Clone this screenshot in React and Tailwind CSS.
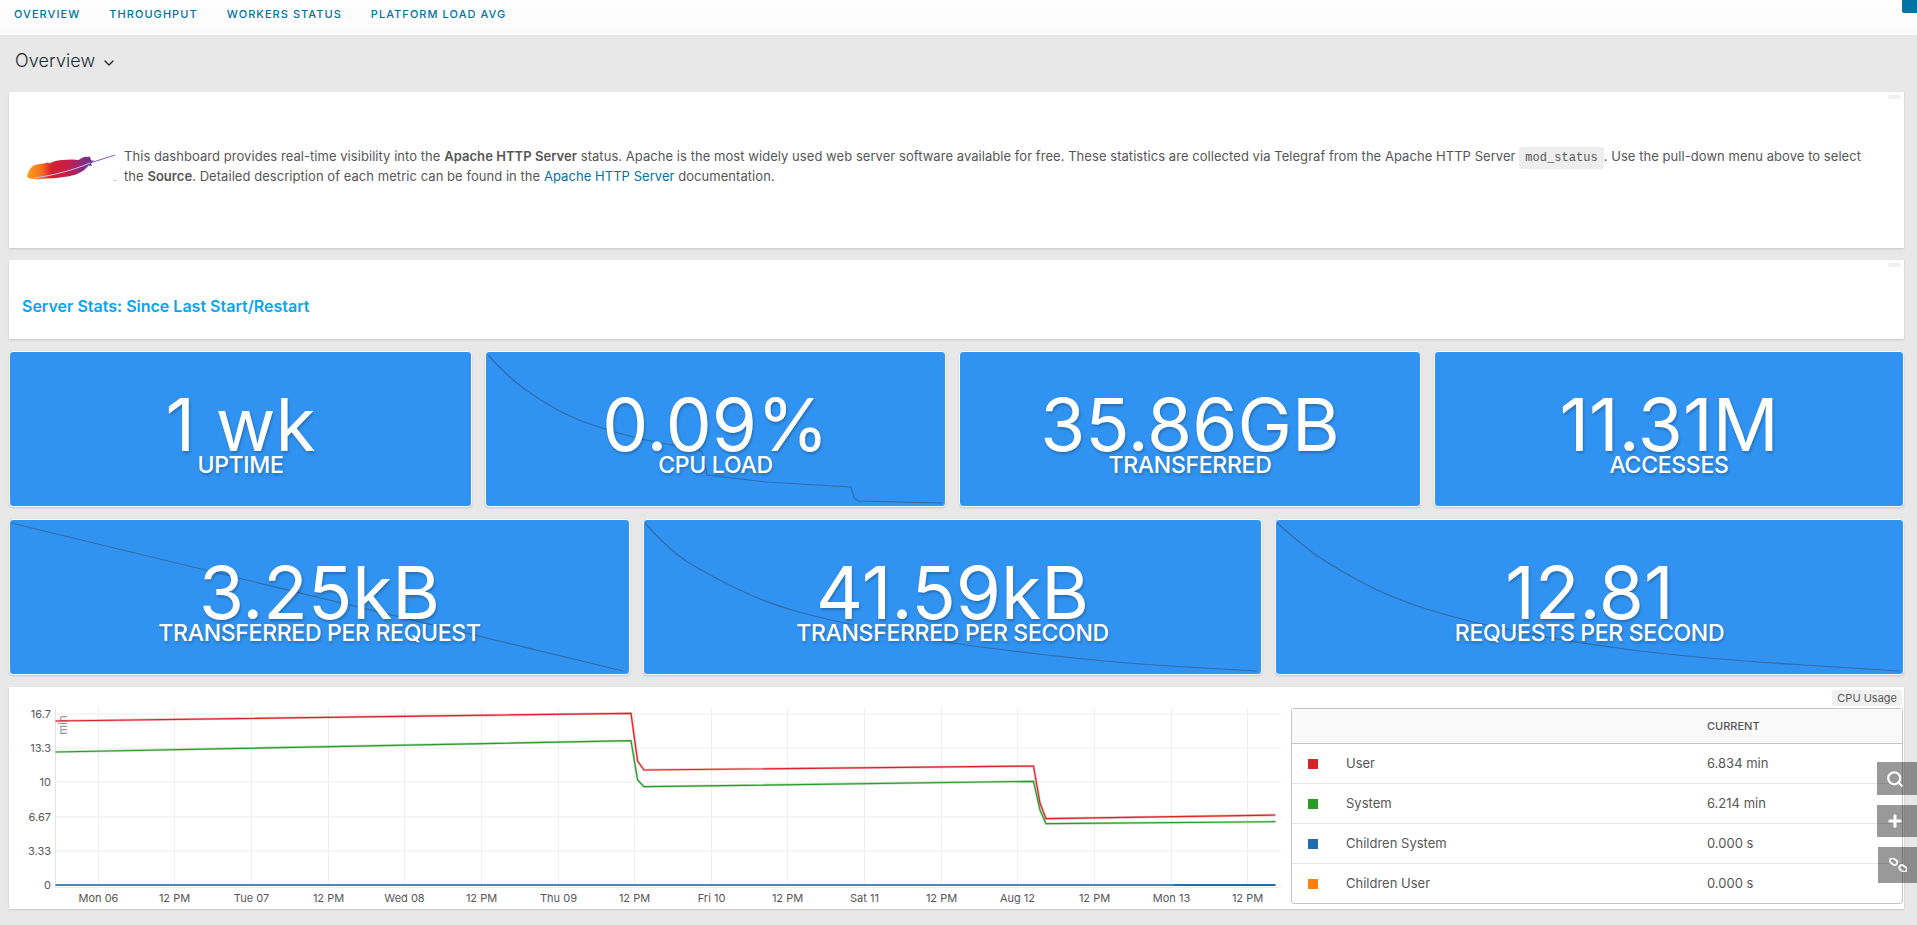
import { ChevronDown, Plus, Search } from 'lucide-react';

const sans = 'font-["Inter","Noto_Sans",sans-serif]';

const navItems = ['Overview', 'Throughput', 'Workers Status', 'Platform Load AVG'];

// rounds the decay curves off between the sampled points
const smooth = points => {
  let d = `M${points[0][0]} ${points[0][1]}`;
  for (let i = 1; i < points.length - 1; i++) {
    const [x, y] = points[i];
    const [nx, ny] = points[i + 1];
    d += `Q${x} ${y} ${(x + nx) / 2} ${(y + ny) / 2}`;
  }
  const last = points[points.length - 1];
  return `${d}L${last[0]} ${last[1]}`;
};

const topCards = [
  { value: '1 wk', label: 'Uptime' },
  {
    value: '0.09%',
    label: 'CPU Load',
    w: 461,
    line:
      smooth([[2, 3], [23, 26], [54, 48], [84, 65], [121, 78], [158, 88], [213, 98]]) +
      'L216 100L221 123L280 130L365 135L368 146L372 149L456 151',
  },
  { value: '35.86GB', label: 'Transferred' },
  { value: '11.31M', label: 'Accesses' },
];

const bottomCards = [
  { value: '3.25kB', label: 'Transferred per request', w: 621, line: 'M1 3L613 151' },
  {
    value: '41.59kB',
    label: 'Transferred per second',
    w: 619,
    line: smooth([[1, 3], [25, 30], [61, 53], [122, 83], [184, 100], [250, 113], [317, 125], [470, 143], [613, 151]]),
  },
  {
    value: '12.81',
    label: 'Requests per second',
    w: 629,
    line: smooth([[1, 3], [25, 24], [51, 43], [112, 77], [192, 102], [295, 122], [417, 138], [623, 151]]),
  },
];

const yTicks = [
  ['16.7', 714],
  ['13.3', 748],
  ['10', 782],
  ['6.67', 817],
  ['3.33', 851],
  ['0', 885],
];

const xTicks = [
  ['Mon 06', 98.5],
  ['12 PM', 174.5],
  ['Tue 07', 251.5],
  ['12 PM', 328.5],
  ['Wed 08', 404.5],
  ['12 PM', 481.5],
  ['Thu 09', 558.5],
  ['12 PM', 634.5],
  ['Fri 10', 711.5],
  ['12 PM', 787.5],
  ['Sat 11', 864.5],
  ['12 PM', 941.5],
  ['Aug 12', 1017.5],
  ['12 PM', 1094.5],
  ['Mon 13', 1171.5],
  ['12 PM', 1247.5],
];

const redLine = '55.5,721 631,713.3 637.6,761 644,770 1033.5,766 1040,803 1046,818.7 1275.5,815';
const greenLine = '55.5,752 631,740.7 637.6,780 644,786.7 1033.5,781.3 1040,810 1046,823.7 1275.5,821.7';

const legend = [
  { name: 'User', value: '6.834 min', color: 'bg-[#d8232a]' },
  { name: 'System', value: '6.214 min', color: 'bg-[#2a9a2a]' },
  { name: 'Children System', value: '0.000 s', color: 'bg-[#1f6db0]' },
  { name: 'Children User', value: '0.000 s', color: 'bg-[#ff7f0e]' },
];

const ApacheFeather = () => (
  <svg width="92" height="28" viewBox="0 0 92 28" className="mb-[4px] shrink-0">
    <defs>
      <linearGradient id="feather" x1="0" y1="0" x2="1" y2="0">
        <stop offset="0" stopColor="#f9a11b" />
        <stop offset="0.22" stopColor="#f4701f" />
        <stop offset="0.36" stopColor="#d8202f" />
        <stop offset="0.62" stopColor="#c41e4a" />
        <stop offset="0.82" stopColor="#8f2a7c" />
        <stop offset="1" stopColor="#5f3a96" />
      </linearGradient>
    </defs>
    <path
      d="M1 23C2 18 4 13 9 11C14 9.500 18 10 22 8.500L24 9.500C26 7.500 31 6.500 36 6C42 5.500 48 5 52 6C54 5.500 55 4 57 3.500C58 2.500 60 2.500 61 3L64 2.500L65 6.500L68 6.500L65 9.500L66 12L62.500 11.500C60 15 56 18 50 20.500C40 23.500 25 24.500 14 25C9 25.500 4 25 1 23Z"
      fill="url(#feather)"
    />
    <path d="M7 24C25 22 48 16 64 9L89 1" fill="none" stroke="#7a4aa6" strokeWidth="0.9" />
    <path d="M7 24C25 22 48 16 64 9" fill="none" stroke="#fff" strokeOpacity="0.75" strokeWidth="0.9" />
    <rect x="88" y="26" width="2" height="1" fill="#b5b5b5" />
  </svg>
);

const StatCard = ({ value, label, w, line }) => (
  <div className="relative h-[156px] overflow-hidden rounded-[4px] border border-white bg-[#3193f1] shadow-[0_1px_2px_rgba(0,0,0,0.15)]">
    {line && (
      <svg className="absolute inset-0" width={w} height="154" viewBox={`0 0 ${w} 154`} fill="none">
        <path d={line} stroke="#33587f" strokeOpacity="0.65" strokeWidth="1.2" />
      </svg>
    )}
    <div className="relative flex h-full flex-col items-center pt-[43px] text-white [text-shadow:1px_2px_3px_rgba(0,0,0,0.25)]">
      <div className="text-[73px] leading-[60px] font-normal">{value}</div>
      <div className="mt-[1px] text-[23px] leading-[18px] font-medium tracking-[-0.3px] uppercase">{label}</div>
    </div>
  </div>
);

const CpuChart = () => (
  <svg width="1282" height="222" className="block shrink-0">
    <g transform="translate(-9 -687)">
      {yTicks.map(([label, y]) => (
        <g key={label}>
          <line x1="55" x2="1281" y1={y} y2={y} stroke="#eeeeee" strokeWidth="1.2" />
          <text x="51" y={y + 4} textAnchor="end" fontSize="11" fill="#565656">
            {label}
          </text>
        </g>
      ))}
      <line x1="55" x2="1281" y1="887.500" y2="887.500" stroke="#eeeeee" />
      <line x1="55.500" x2="55.500" y1="708" y2="888" stroke="#e4e4e4" />
      {xTicks.map(([label, x], i) => (
        <g key={i}>
          <line x1={x} x2={x} y1="708" y2="888" stroke="#eeeeee" />
          <text x={x} y="902" textAnchor="middle" fontSize="11" fill="#565656">
            {label}
          </text>
        </g>
      ))}
      <text transform="rotate(-90 67 725)" x="67" y="725" textAnchor="middle" fontSize="11" fill="#8c8c8c">
        min
      </text>
      <polyline points={redLine} fill="none" stroke="#d8232a" strokeOpacity="0.3" strokeWidth="2.500" />
      <polyline points={redLine} fill="none" stroke="#d8232a" strokeWidth="1.200" />
      <polyline points={greenLine} fill="none" stroke="#2a9a2a" strokeOpacity="0.3" strokeWidth="2.500" />
      <polyline points={greenLine} fill="none" stroke="#2a9a2a" strokeWidth="1.200" />
      <line x1="55.500" x2="1174" y1="885" y2="885" stroke="#4a87bd" strokeWidth="2" />
      <line x1="1174" x2="1275.500" y1="885" y2="885" stroke="#1f6db0" strokeWidth="2" />
    </g>
  </svg>
);

export default function App() {
  return (
    <div className={`relative h-[925px] overflow-hidden bg-[#e8e8e8] ${sans}`}>
      <header className="flex h-[35px] items-start gap-[29px] bg-gradient-to-b from-white to-[#fafafa] pt-[7px] pl-[14px]">
        {navItems.map(item => (
          <span
            key={item}
            className="text-[11px] leading-[14px] font-medium tracking-[1.05px] text-[#0072a3] uppercase"
          >
            {item}
          </span>
        ))}
      </header>
      <div className="absolute top-0 right-0 h-[13px] w-[15px] rounded-bl-[2px] bg-[#0072a3]" />

      <div className="flex h-[57px] items-start gap-[6px] pt-[15px] pl-[15px] text-[#1b2a32]">
        <span className="text-[18px] leading-[22px] font-light tracking-[0.1px]">Overview</span>
        <ChevronDown size={16} strokeWidth={2} className="mt-[5px]" />
      </div>

      <main className="flex flex-col pr-[13px] pl-[9px]">
        <section className="relative flex h-[156px] items-center bg-white pl-[17px] shadow-[0_1px_2px_rgba(0,0,0,0.15)]">
          <span className="absolute top-[3px] right-[3px] h-[4px] w-[13px] rounded-[2px] bg-[#f0f0f0]" />
          <ApacheFeather />
          <p className="mb-[8px] ml-[6px] w-[1745px] text-[13px] leading-[18px] tracking-[0.05px] text-[#565656]">
            This dashboard provides real-time visibility into the <b className="font-semibold">Apache HTTP Server</b>{' '}
            status. Apache is the most widely used web server software available for free. These statistics are
            collected via Telegraf from the Apache HTTP Server{' '}
            <code className='rounded-[3px] bg-[#eeeeee] px-[6px] py-[4px] font-["Liberation_Mono",monospace] text-[12px]'>
              mod_status
            </code>
            . Use the pull-down menu above to select the <b className="font-semibold">Source</b>. Detailed description
            of each metric can be found in the <span className="text-[#0072a3]">Apache HTTP Server</span>{' '}
            documentation.
          </p>
        </section>

        <section className="relative mt-[12px] flex h-[79px] items-center bg-white pl-[13px] shadow-[0_1px_2px_rgba(0,0,0,0.15)]">
          <span className="absolute top-[3px] right-[3px] h-[4px] w-[13px] rounded-[2px] bg-[#f0f0f0]" />
          <h2 className="mt-[13px] text-[16px] font-semibold text-[#09a4ee]">
            Server Stats: Since Last Start/Restart
          </h2>
        </section>

        <div className="mt-[12px] grid grid-cols-[463px_461px_462px_1fr] gap-[13px]">
          {topCards.map(card => (
            <StatCard key={card.label} {...card} />
          ))}
        </div>

        <div className="mt-[12px] grid grid-cols-[621px_619px_1fr] gap-[13px]">
          {bottomCards.map(card => (
            <StatCard key={card.label} {...card} />
          ))}
        </div>

        <section className="relative mt-[12px] flex h-[222px] bg-white shadow-[0_1px_2px_rgba(0,0,0,0.15)]">
          <CpuChart />
          <span className="absolute top-[3px] right-[2px] rounded-[3px] bg-[#f0f0f0] px-[5px] text-[11px] leading-[16px] text-[#565656]">
            CPU Usage
          </span>
          <div className="mt-[21px] mr-[1px] h-[196px] flex-1 rounded-[3px] border border-[#c4c4c4] text-[13px] text-[#565656]">
            <div className="grid h-[35px] grid-cols-[415px_1fr] items-center border-b border-[#c4c4c4] bg-[#f9f9f9] text-[11px] font-medium">
              <span />
              <span>CURRENT</span>
            </div>
            {legend.map(row => (
              <div
                key={row.name}
                className="grid h-[40px] grid-cols-[54px_361px_1fr] items-center border-b border-[#e8e8e8] last:border-b-0"
              >
                <span className={`ml-[16px] h-[10px] w-[10px] ${row.color}`} />
                <span>{row.name}</span>
                <span>{row.value}</span>
              </div>
            ))}
          </div>
        </section>
      </main>

      <div className="absolute top-[762px] right-0 flex h-[33px] w-[40px] items-center bg-black/40 pl-[9px] text-white">
        <Search size={18} strokeWidth={3} />
      </div>
      <div className="absolute top-[805px] right-0 flex h-[32px] w-[40px] items-center bg-black/40 pl-[9px] text-white">
        <Plus size={18} strokeWidth={4} />
      </div>
      <div className="absolute top-[847px] right-0 flex h-[36px] w-[39px] items-center bg-black/40 pl-[11px] text-white">
        <svg width="18" height="14" viewBox="0 0 18 14" fill="none" stroke="currentColor" strokeWidth="1.8">
          <rect x="-4" y="-2.500" width="8" height="5" rx="2.500" transform="translate(4.500 3.500) rotate(35)" />
          <rect x="-4" y="-2.500" width="8" height="5" rx="2.500" transform="translate(14 10.500) rotate(35)" />
        </svg>
      </div>
    </div>
  );
}
